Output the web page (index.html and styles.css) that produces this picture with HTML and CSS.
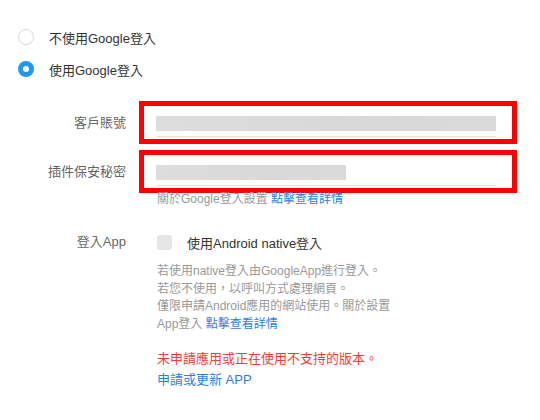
FILE: index.html
```html
<!DOCTYPE html>
<html lang="zh-Hant">
<head>
<meta charset="utf-8">
<title>Google登入設置</title>
<link rel="stylesheet" href="styles.css">
</head>
<body>
<div class="page">
  <div class="radio-row">
    <span class="radio"></span>
    <span class="radio-text">不使用Google登入</span>
  </div>
  <div class="radio-row">
    <span class="radio checked"></span>
    <span class="radio-text">使用Google登入</span>
  </div>

  <div class="form-row first">
    <div class="label">客戶賬號</div>
    <div class="field">
      <div class="mask long"></div>
      <div class="underline"></div>
    </div>
  </div>
  <div class="form-row second">
    <div class="label">插件保安秘密</div>
    <div class="field">
      <div class="mask short"></div>
      <div class="underline"></div>
    </div>
  </div>
  <div class="note indent">關於Google登入設置 <a class="link" href="#">點擊查看詳情</a></div>

  <div class="form-row app">
    <div class="label">登入App</div>
    <div class="check-wrap">
      <span class="checkbox"></span>
      <span class="check-text">使用Android native登入</span>
    </div>
  </div>
  <div class="help indent">
    若使用native登入由GoogleApp進行登入。<br>
    若您不使用，以呼叫方式處理網頁。<br>
    僅限申請Android應用的網站使用。關於設置<br>
    App登入 <a class="link" href="#">點擊查看詳情</a>
  </div>
  <div class="status indent">
    <div class="error">未申請應用或正在使用不支持的版本。</div>
    <a class="link big" href="#">申請或更新 APP</a>
  </div>
</div>
</body>
</html>
```

FILE: styles.css
```css
html, body {
  margin: 0;
  padding: 0;
  background: #fff;
}
body {
  font-family: "Liberation Sans", "Noto Sans CJK TC", sans-serif;
  font-size: 13px;
  color: #333;
}
.page {
  padding-top: 21px;
  width: 540px;
}
.radio-row {
  display: flex;
  align-items: center;
  height: 32px;
  padding-left: 18px;
}
.radio {
  box-sizing: border-box;
  width: 16px;
  height: 16px;
  border-radius: 50%;
  border: 1px solid #d9d9d9;
  background: #fff;
  flex: none;
}
.radio.checked {
  border: 5px solid #2196f3;
  background: #fff;
}
.radio-text {
  margin-left: 15px;
  color: #333;
}
.form-row {
  display: grid;
  grid-template-columns: 126px 378px;
  column-gap: 13px;
  align-items: center;
}
.form-row.first {
  margin-top: 16px;
}
.form-row.second {
  margin-top: 6px;
}
.label {
  text-align: right;
  color: #666;
  line-height: 16px;
}
.field {
  border: 5px solid #ff0000;
  padding: 10px 16px 2px 12px;
}
.mask {
  height: 15px;
  background: linear-gradient(90deg, #dddddd, #d8d8d8 60%, #dadada);
}
.mask.long {
  width: 340px;
}
.mask.short {
  width: 190px;
}
.underline {
  margin-top: 5px;
  margin-left: 1px;
  height: 1px;
  background: #e3e3e3;
}
.indent {
  margin-left: 157px;
}
.note {
  font-size: 12px;
  line-height: 14px;
  margin-top: -1px;
  color: #999;
}
.link {
  color: #2b7de9;
  text-decoration: none;
}
.form-row.app {
  margin-top: 26px;
  height: 20px;
}
.check-wrap {
  display: flex;
  align-items: center;
  padding-left: 18px;
}
.checkbox {
  width: 15px;
  height: 15px;
  border-radius: 3px;
  background: #e6e6e6;
  flex: none;
}
.check-text {
  margin-left: 15px;
  color: #333;
}
.help {
  margin-top: 11px;
  font-size: 12px;
  line-height: 17.5px;
  color: #999;
}
.status {
  margin-top: 15px;
  line-height: 21px;
}
.error {
  color: #ff3b30;
}
.link.big {
  font-size: 13px;
}
```
